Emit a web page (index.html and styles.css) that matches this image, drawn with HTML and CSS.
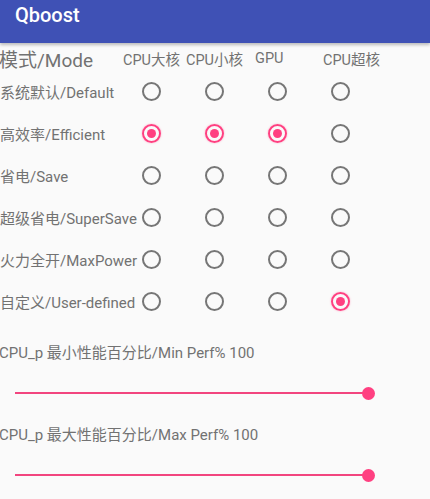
FILE: index.html
```html
<!DOCTYPE html>
<html lang="zh">
  <head>
    <meta charset="UTF-8" />
    <meta name="viewport" content="width=device-width, initial-scale=1.0" />
    <title>Qboost</title>
    <link rel="stylesheet" href="styles.css">
  </head>
  <body>
    <!-- App bar -->
    <div class="appbar">
      <span class="title">Qboost</span>
    </div>

    <!-- Mode table -->
    <div class="modes">
      <div class="head">
        <span class="mode-title">模式/Mode</span>
        <span class="col col-big">CPU大核</span>
        <span class="col col-little">CPU小核</span>
        <span class="col col-gpu">GPU</span>
        <span class="col col-prime">CPU超核</span>
      </div>

      <div class="row">
        <span class="label">系统默认/Default</span>
        <span class="radio"></span>
        <span class="radio"></span>
        <span class="radio"></span>
        <span class="radio"></span>
      </div>
      <div class="row">
        <span class="label">高效率/Efficient</span>
        <span class="radio on"></span>
        <span class="radio on"></span>
        <span class="radio on"></span>
        <span class="radio"></span>
      </div>
      <div class="row">
        <span class="label">省电/Save</span>
        <span class="radio"></span>
        <span class="radio"></span>
        <span class="radio"></span>
        <span class="radio"></span>
      </div>
      <div class="row">
        <span class="label">超级省电/SuperSave</span>
        <span class="radio"></span>
        <span class="radio"></span>
        <span class="radio"></span>
        <span class="radio"></span>
      </div>
      <div class="row">
        <span class="label">火力全开/MaxPower</span>
        <span class="radio"></span>
        <span class="radio"></span>
        <span class="radio"></span>
        <span class="radio"></span>
      </div>
      <div class="row">
        <span class="label">自定义/User-defined</span>
        <span class="radio"></span>
        <span class="radio"></span>
        <span class="radio"></span>
        <span class="radio on"></span>
      </div>
    </div>

    <!-- Perf sliders -->
    <div class="perf first">
      <p class="perf-label">CPU_p 最小性能百分比/Min Perf% 100</p>
      <div class="seek">
        <div class="track"></div>
        <div class="thumb"></div>
      </div>
    </div>
    <div class="perf">
      <p class="perf-label">CPU_p 最大性能百分比/Max Perf% 100</p>
      <div class="seek">
        <div class="track"></div>
        <div class="thumb"></div>
      </div>
    </div>
  </body>
</html>
```

FILE: styles.css
```css
* {
  box-sizing: border-box;
  font-family: Roboto, "Noto Sans CJK SC", sans-serif;
}

body {
  margin: 0;
  background-color: #fafafa;
  color: #727272;
  overflow: hidden;
}

.appbar {
  height: 43px;
  background-color: #3f51b5;
  box-shadow: 0 2px 3px rgba(0, 0, 0, 0.25);
  padding-left: 15px;
}

.title {
  color: white;
  font-size: 20px;
  font-weight: 500;
  line-height: 31px;
}

.head {
  display: flex;
  align-items: center;
  height: 24px;
  margin-top: 3px;
  white-space: nowrap;
}

.mode-title {
  width: 124px;
  font-size: 19px;
  margin-left: -1px;
  flex: none;
}

.col {
  font-size: 14.5px;
  flex: none;
}

.col-big {
  width: 63px;
}

.col-little {
  width: 69px;
}

.col-gpu {
  width: 68px;
}

.row {
  display: flex;
  align-items: center;
  height: 42px;
  gap: 44px;
  white-space: nowrap;
}

.label {
  width: 142px;
  margin-right: -44px;
  font-size: 15px;
  flex: none;
}

.radio {
  width: 19px;
  height: 19px;
  flex: none;
  border: 2px solid #767676;
  border-radius: 50%;
  display: flex;
  align-items: center;
  justify-content: center;
}

.radio.on {
  border-color: #ff4081;
  box-shadow: 0 0 2px rgba(255, 64, 129, 0.45);
}

.radio.on::after {
  content: "";
  width: 9px;
  height: 9px;
  border-radius: 50%;
  background-color: #ff4081;
}

.perf.first {
  margin-top: 21px;
}

.perf {
  margin-top: 12px;
}

.perf-label {
  margin: 0;
  font-size: 15px;
  line-height: 20px;
  white-space: nowrap;
  margin-left: -1px;
}

.seek {
  position: relative;
  height: 40px;
  margin-top: 10px;
  width: 375px;
  display: flex;
  align-items: center;
  padding-left: 15px;
}

.track {
  height: 2px;
  width: 353px;
  background-color: #f2457f;
}

.thumb {
  position: absolute;
  left: 362px;
  top: 13.5px;
  width: 13px;
  height: 13px;
  border-radius: 50%;
  background-color: #ff4081;
}
```
